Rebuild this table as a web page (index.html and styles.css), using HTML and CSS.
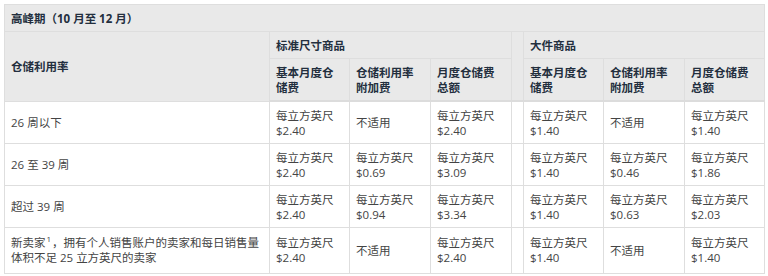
FILE: index.html
```html
<!DOCTYPE html>
<html lang="zh-CN">
<head>
<meta charset="utf-8">
<link rel="stylesheet" href="styles.css">
</head>
<body>
<table class="fees">
  <colgroup>
    <col class="c-label">
    <col class="c-a"><col class="c-b"><col class="c-b">
    <col class="c-gap">
    <col class="c-a"><col class="c-b"><col class="c-a">
  </colgroup>
  <thead>
    <tr><th colspan="8" class="title">高峰期（10 月至 12 月）</th></tr>
    <tr>
      <th rowspan="2">仓储利用率</th>
      <th colspan="3">标准尺寸商品</th>
      <th rowspan="2" class="gap"></th>
      <th colspan="3">大件商品</th>
    </tr>
    <tr>
      <th>基本月度仓储费</th><th>仓储利用率附加费</th><th>月度仓储费总额</th>
      <th>基本月度仓储费</th><th>仓储利用率附加费</th><th>月度仓储费总额</th>
    </tr>
  </thead>
  <tbody>
    <tr>
      <td>26 周以下</td>
      <td>每立方英尺<br>$2.40</td><td>不适用</td><td>每立方英尺<br>$2.40</td>
      <td class="gap"></td>
      <td>每立方英尺<br>$1.40</td><td>不适用</td><td>每立方英尺<br>$1.40</td>
    </tr>
    <tr>
      <td>26 至 39 周</td>
      <td>每立方英尺<br>$2.40</td><td>每立方英尺<br>$0.69</td><td>每立方英尺<br>$3.09</td>
      <td class="gap"></td>
      <td>每立方英尺<br>$1.40</td><td>每立方英尺<br>$0.46</td><td>每立方英尺<br>$1.86</td>
    </tr>
    <tr>
      <td>超过 39 周</td>
      <td>每立方英尺<br>$2.40</td><td>每立方英尺<br>$0.94</td><td>每立方英尺<br>$3.34</td>
      <td class="gap"></td>
      <td>每立方英尺<br>$1.40</td><td>每立方英尺<br>$0.63</td><td>每立方英尺<br>$2.03</td>
    </tr>
    <tr class="last">
      <td>新卖家<sup>1</sup>，拥有个人销售账户的卖家和每日销售量<br>体积不足 25 立方英尺的卖家</td>
      <td>每立方英尺<br>$2.40</td><td>不适用</td><td>每立方英尺<br>$2.40</td>
      <td class="gap"></td>
      <td>每立方英尺<br>$1.40</td><td>不适用</td><td>每立方英尺<br>$1.40</td>
    </tr>
  </tbody>
</table>
</body>
</html>
```
FILE: styles.css
```css
html, body {
  margin: 0;
  padding: 0;
  background: #ffffff;
}
body {
  padding: 4px;
  font-family: "Open Sans", "Noto Sans CJK SC", sans-serif;
  font-size: 11.5px;
  line-height: 15px;
  color: #3a3a3a;
}
.fees {
  width: 760px;
  table-layout: fixed;
  border-collapse: collapse;
  border: 1px solid #d4d4d4;
}
.c-label { width: 265px; }
.c-a { width: 80px; }
.c-b { width: 81px; }
.c-gap { width: 12px; }
.fees th, .fees td {
  border: 1px solid #dedede;
  padding: 5.5px 6px;
  vertical-align: middle;
  text-align: left;
}
.fees th {
  background: #e9e9e9;
  font-weight: bold;
  color: #232f3e;
}
.fees thead tr:last-child th {
  border-bottom: 2px solid #dcdcdc;
}
.fees th.gap {
  border-bottom: 2px solid #dcdcdc;
}
.fees td {
  color: #444;
  background: #fff;
}
.fees .last td {
  padding-top: 7px;
  padding-bottom: 8px;
}
.fees .gap {
  padding: 0;
}
.fees sup {
  font-size: 8px;
  line-height: 0;
  vertical-align: 5px;
  margin: 0 1px;
}
```
